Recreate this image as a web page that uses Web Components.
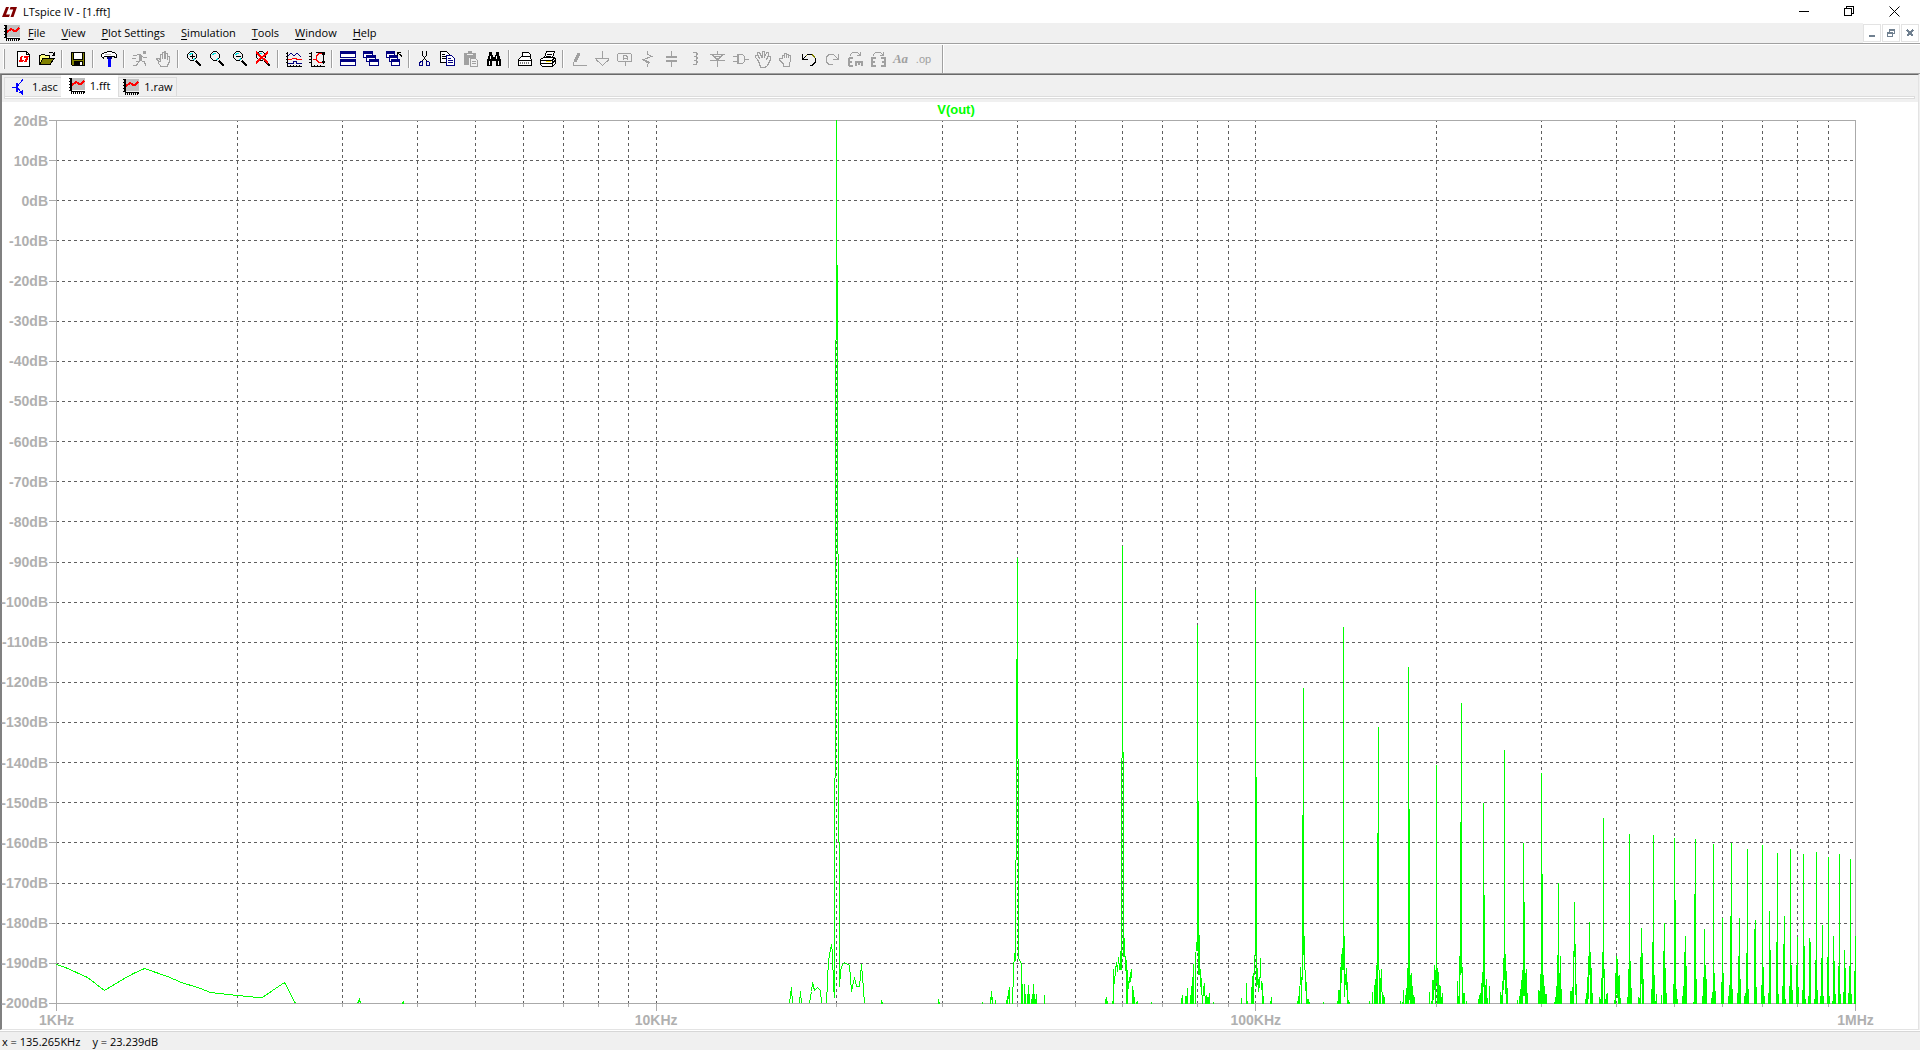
<!DOCTYPE html>
<html lang="en">
<head>
<meta charset="utf-8">
<title>LTspice IV - [1.fft]</title>
<style>
html,body{margin:0;height:100%}
body{font:11px/14px "Open Sans","Noto Sans",sans-serif;color:#000;background:#f0f0f0;overflow:hidden}
</style>
</head>
<body>
<app-window>
  <title-bar>LTspice IV - [1.fft]</title-bar>
  <menu-bar></menu-bar>
  <tool-bar></tool-bar>
  <mdi-pane>
    <tab-strip>
      <doc-tab icon="transistor">1.asc</doc-tab>
      <doc-tab icon="chart" active>1.fft</doc-tab>
      <doc-tab icon="chart">1.raw</doc-tab>
    </tab-strip>
    <fft-plot trace="V(out)"></fft-plot>
  </mdi-pane>
  <status-bar><span>x = 135.265KHz</span><span>y = 23.239dB</span></status-bar>
</app-window>
<script>
const G = '#a0a0a0', N = '#000080', W = '#fff';
const p = (d, stroke = '#000', fill = 'none', w = 1) => `<path d="${d}" stroke="${stroke}" fill="${fill}" stroke-width="${w}"/>`;
const f = (d, fill = '#000') => `<path d="${d}" fill="${fill}"/>`;
const win = (x, y, w, h) => p(`M${x}.5 ${y}.5h${w}v${h}h-${w}z`, N, W) + f(`M${x} ${y}h${w + 1}v3h-${w + 1}z`, N);
const lens = p('M4.500.5h3l3 3v3l-3 3h-3l-3-3v-3z') + p('M3.500 4v-1h1v-1h2', '#00e0e0') + p('M7 8.500h1v-1h1', '#00e0e0') + p('M10 10l5 5', '#000', 'none', 2);
const logo = (c, t) => `<g transform="${t}">` + f('M4 0h3L4 7.500h4L7 10H0zM8.500 0H15l-3.500 10H8.500l2.700-7.500H7.600z', c) + '</g>';

const ICONS = {
  chart: f('M2 0h14v12H2z', '#c0c0c0') + f('M1 0h2v13h13v2h-1v1h-1v-2h-1v2h-1v-2h-1v2h-1v-2H9v2H8v-2H7v2H6v-2H5v2H4v-2H3v2H2v-3H0v-1h1v-2H0V9h1V7H0V6h1V4H0V3h1V1H0V0z') + p('M3 7L7 4L11 6.500L15.500 3', '#f00', 'none', 2),
  transistor: p('M6 4v9', '#00f', 'none', 2) + p('M1 8.500h5M6.500 7L12 .5M6.500 9L11.500 14.500', '#00f') + f('M12 16L8 13.500L11.500 11z', '#00f'),
  neu: p('M1.500.5h9l3 3v12h-12z', '#000', W) + p('M10.500.5v3h3') + f('M5 5h2l-1.500 4H8l-1 2H3zM8 5h5l-2 6H8l2-4H7.500z', '#f00'),
  open: p('M.5 13.500v-9h1l1-1h3l1 1h4v3', '#000', '#ffff80') + p('M.5 13.500l3.500-6h11l-4 6z', '#000', '#808000') + p('M9.500 2.500l1-1h3l1.500 2M15.500 1v3h-3'),
  save: p('M1.500 1.500h13v13h-12l-1-1z', '#000', '#808000') + f('M4 2h8v6H4z', W) + p('M3.500 2v6.500h9V2') + f('M4 10h9v5H4z') + f('M10 11h2v3h-2z', W),
  hammer: p('M.5 5.500v-2l3-2h2l1-1h4l1 1h2l2 2v3h-1l-2-1h-9l-1 1.500z', '#000', W) + f('M4 3h6v1H4z', '#c0c0c0') + f('M7 7h3v9H7z', '#00f') + f('M6 6h5v2H6z', '#000080'),
  run: p('M1 4.500h3M0 7.500h4M4 10.500h4M3.500 5.500l2-2h3l3 3h3M9.500 4v4l-3 3l-2 3.500H1M8 9.500l4 1 2 4', G) + f('M11 0h3v3h-3z', G) + p('M8 4v5', G, 'none', 3),
  hand: p('M4.500 11L1.500 8V7h2l1.500 2V3.500h2V8V1.500h2V8V.5h1.500V8V2.500h2v6V5.500h1.500v6l-2 4h-6l-3-4', G),
  zin: lens + p('M4 5h5M6.500 3v5', '#000'),
  zoom: lens,
  zout: lens + p('M4 5.500h5', '#000'),
  zfit: lens + p('M1 1L13 12M13 1L1 12', '#f00', 'none', 2),
  plot1: p('M1.500 1v14.500H16M0 2.500h2M0 5.500h2M0 8.500h2M0 11.500h2M4.500 14v2M7.500 14v2M10.500 14v2M13.500 14v2') + p('M2 5L5 2L8 5L11 2L15 6', N) + p('M2 8.500h3l2-1h3l1 1h5', '#f00') + p('M2 12.500h5l1-2h2l1 2h5', N),
  plot2: p('M2.500 1v14.500H16M0 2.500h3M0 5.500h3M0 8.500h3M0 11.500h3M5.500 14v2M8.500 14v2M11.500 14v2M14.500 2v11M13 3.500L14.500 1.500L16 3.500M13 10.500L14.500 12.500L16 10.500M7 1.500h9') + p('M13 2.500h-3l-3 3v3l3 3h3M4 8.500h3', '#f00'),
  tile: win(0, 0, 15, 6) + win(0, 8, 15, 6),
  casc: win(0, 0, 9, 6) + win(3, 4, 9, 6) + win(6, 8, 9, 6),
  casx: win(0, 0, 8, 6) + win(3, 4, 8, 6) + win(5, 8, 8, 6) + p('M15.500 6V5L11.500 1.500M11.500 5V1.500H15'),
  cut: p('M5.500 0v4l4 6M9.500 0v4l-4 6', '#000') + p('M4.500 10.500h1v4h-3v-3zM9.500 10.500h2l1 1v3h-3z', N),
  copy: p('M.5.5h6l3 3v8h-9z', '#000', W) + p('M2 3.500h3M2 5.500h5M2 7.500h5') + p('M6.500 4.500h5l3 3v7h-8z', N, W) + p('M8 7.500h3M8 9.500h5M8 11.500h5', N),
  paste: f('M1 2h4V0h4v2h4v5H6v7H1z', G) + f('M4 3h6v1H4z', '#f0f0f0') + p('M7.500 7.500h5l2 2v6h-7z', G, '#f0f0f0') + p('M9 10.500h4M9 12.500h4', G),
  find: f('M3 1h3v3h1v2h2V4h1V1h3v3l2 5v6h-5v-5H6v5H1V9l2-5z') + f('M4 5h1v3H4zM3 10h1v4H3zM10 5h1v3h-1zM12 10h1v4h-1z', W),
  print1: p('M5.500 6.500v-5h6l2 2v3', '#000', W) + p('M1.500 8.500l3-3h8l2 3v6h-13z', '#000', W) + p('M2 9.500h12', '#000') + '<path d="M3 11h10M3 12.500h10" stroke="#808080" stroke-dasharray="1 1"/>' + p('M1 14.500h14', '#000'),
  print2: p('M4.500 7L6.500.5h8l-2 6', '#000', W) + p('M7 3.500h5M6 5.500h5') + p('M.5 8.500l3-2h11l1 1v5l-3 3h-10l-2-2z', '#000', W) + p('M1 9.500h11l3-3M1 12.500h11l3-3M12.500 9v6') + p('M6 10.500h5', '#ffe000'),
  pencil: p('M1.500 14.500H16M2.500 11v3H5', G) + p('M4 11L8 2', G, 'none', 3),
  gnd: p('M8.500 0v7M1 7.500h14M2 8.500L8.500 14.500L15 8.500', G),
  label: p('M3.500 2.500h-2l-1 1v6l1 1h13v-7l-1-1zM8.500 11v4', G) + p('M6 9V5.500L7 4h2l1 1.500V9M6 7h4', G),
  res: p('M7.500 0v3l4 2.500l-8 3l6 3l-2 2V16M11 5l2.500 1.500M3 9l5 3', G),
  cap: p('M8.500 0v6M8.500 10v6', G) + p('M3 6h11M3 10h11', G, 'none', 2),
  ind: p('M7 1.500h3l1 1v1l-1 1.500h-2h2l1 1.500v1l-1 1.500h-2h2l1 1.500v1l-1 2H7', G, 'none', 1),
  diode: p('M8.500 0v4M1 3.500h15M3.500 4l5 5l5-5M1 9.500h15M8.500 10v6M5 5h7M7 7h3', G),
  gate: p('M5.500 3.500h5l2 2v5l-2 2h-5zM1 5.500h4M1 10.500h4M13 8.500h4', G, 'none', 1) + p('M6 4v9', G, 'none', 2),
  hands: p('M3.500 10L.5 6.500v-2h2l2 3L2.500 3V1.500h2L7 6.500V1.500L8 .5h1.500v6l2-5h2v2l-2 5 2-3h2v3l-3 6-2 1.500h-5z', G),
  hand2: p('M4.500 12L1.500 9V7.500h3V4h2v3V2.500h2V7V3.500h2V7V4.500h2V9l-1 4v2.500h-6V13z', G),
  undo: p('M1.500 3v5.500H7M2 8L6 4', '#000') + p('M5 4.500l2-1h4l3 3', '#808000') + p('M14.500 7v4l-3 3H9M6 3.500h5'),
  redo: p('M14.500 3v5.500H9M14 8L10 4', G) + p('M11 4.500l-2-1H5l-3 3v4l3 3h4', G),
  rot: p('M3 4.500C4 .5 11 .5 13 4M13.500 1v3.500H10', G) + p('M2 7v8M2 7h4M2 11h3M2 15h4', G, 'none', 2) + p('M8 11h8M9 10v5M12 11v3M15 10v5', G, 'none', 2),
  mir: p('M3 4.500C4 .5 11 .5 13 4M13.500 1v3.500H10', G) + p('M2 7v8M1 7h5M2 11h3M1 15h5M15 7v8M16 7h-5M15 11h-3M16 15h-5', G, 'none', 2)
};
const svg = (name, cls = '') => `<svg class="${cls}" width="16" height="16" viewBox="0 0 16 16" fill="none" shape-rendering="crispEdges" aria-hidden="true">${ICONS[name]}</svg>`;
const BASE = `*,:host{box-sizing:border-box}button{font:inherit;color:inherit;background:none;border:0;padding:0;margin:0}svg{display:block;overflow:visible}`;
const define = (tag, render) => customElements.define(tag, class extends HTMLElement {
  constructor() { super(); this.attachShadow({ mode: 'open' }); }
  connectedCallback() { this.shadowRoot.innerHTML = render(this); }
});

define('app-window', () => `<style>${BASE}:host{display:flex;flex-direction:column;height:100vh}</style><slot></slot>`);

define('title-bar', () => `<style>${BASE}
:host{display:flex;align-items:center;flex:none;height:23px;background:#fff;padding:0 3px 0 2px}
.t{flex:1;padding-left:6px}
button{width:45px;height:21px;display:flex;align-items:center;justify-content:center}
</style>
<svg width="15" height="10" viewBox="0 0 15 10">${logo('#800000', '')}</svg>
<span class="t"><slot></slot></span>
<button aria-label="Minimize"><svg width="11" height="11" shape-rendering="crispEdges"><path d="M0 5.500h10" stroke="#000"/></svg></button>
<button aria-label="Restore"><svg width="11" height="11" fill="none" shape-rendering="crispEdges"><path d="M.5 2.500h7v7h-7zM2.500 2V.5h7v7H8" stroke="#000"/></svg></button>
<button aria-label="Close"><svg width="11" height="11"><path d="M.5.5l10 10M10.500.5l-10 10" stroke="#000"/></svg></button>`);

define('menu-bar', () => `<style>${BASE}
:host{display:flex;align-items:center;flex:none;height:21px;background:#f0f0f0;border-bottom:1px solid #a0a0a0;padding-left:4px}
nav{display:flex;flex:1;gap:16px;padding-left:8px}
u{text-underline-offset:2px}
.m{display:flex;gap:1px;background:#fff;padding:1px 1px 1px 0;align-self:stretch}
.m button{width:18px;height:18px;border:1px solid #e3e3e3;display:flex;align-items:center;justify-content:center}
</style>
${svg('chart')}
<nav>${['File', 'View', 'Plot Settings', 'Simulation', 'Tools', 'Window', 'Help'].map(t => `<button><u>${t[0]}</u>${t.slice(1)}</button>`).join('')}</nav>
<div class="m">
<button aria-label="Minimize document"><svg width="8" height="8" shape-rendering="crispEdges"><path d="M1 7h6" stroke="#708090" stroke-width="2"/></svg></button>
<button aria-label="Restore document"><svg width="8" height="8" fill="none" shape-rendering="crispEdges"><path d="M.5 3.500h5v4h-5zM0 4.500h6M2.500 3V.5h5v4H6M2 1.500h6" stroke="#708090"/></svg></button>
<button aria-label="Close document"><svg width="8" height="8" shape-rendering="crispEdges"><path d="M1 1l6 6M7 1L1 7" stroke="#708090" stroke-width="2"/></svg></button>
</div>`);

const TOOLS = [['neu', 'New'], ['open', 'Open'], 0, ['save', 'Save'], 0, ['hammer', 'Control panel'], 0, ['run', 'Run', 1], ['hand', 'Halt', 1], 0,
  ['zin', 'Zoom in'], ['zoom', 'Pan'], ['zout', 'Zoom out'], ['zfit', 'Zoom full'], 0, ['plot1', 'Pick traces'], ['plot2', 'Autorange'], 0,
  ['tile', 'Tile windows'], ['casc', 'Cascade'], ['casx', 'Close windows'], 0, ['cut', 'Cut'], ['copy', 'Copy'], ['paste', 'Paste', 1], ['find', 'Find'], 0,
  ['print1', 'Print setup'], ['print2', 'Print'], 0, ['pencil', 'Wire', 1], ['gnd', 'Ground', 1], ['label', 'Label net', 1], ['res', 'Resistor', 1], ['cap', 'Capacitor', 1],
  ['ind', 'Inductor', 1], ['diode', 'Diode', 1], ['gate', 'Component', 1], ['hands', 'Move', 1], ['hand2', 'Drag', 1], ['undo', 'Undo'], ['redo', 'Redo', 1],
  ['rot', 'Rotate', 1], ['mir', 'Mirror', 1], ['Aa', 'Text', 1], ['.op', 'Directive', 1]];
define('tool-bar', () => `<style>${BASE}
:host{display:flex;flex:none;height:30px;background:#f0f0f0;border-top:1px solid #fff;border-bottom:1px solid #a0a0a0;padding-left:3px}
.grip{width:2px;margin:4px 7px 4px 0;border-left:1px solid #fff;border-right:1px solid #a0a0a0}
.bar{display:flex;align-items:center;padding-right:7px;border-right:1px solid #a0a0a0;box-shadow:1px 0 #fff}
button{width:23px;height:24px;display:flex;align-items:center;justify-content:center}
i{width:8px;height:18px;display:block}
i::before{content:"";display:block;width:1px;height:18px;margin-left:3px;background:#a0a0a0;box-shadow:1px 0 #fff}
b{color:#a0a0a0;font:italic bold 13px/16px "Liberation Serif",serif}
b.op{font:11px/16px "Liberation Sans",sans-serif}
</style><div class="grip"></div><div class="bar">${TOOLS.map(t => !t ? '<i></i>' :
  `<button aria-label="${t[1]}"${t[2] ? ' disabled' : ''}>${ICONS[t[0]] ? svg(t[0]) : `<b${t[0] === '.op' ? ' class="op"' : ''}>${t[0]}</b>`}</button>`).join('')}</div>`);

define('mdi-pane', () => `<style>${BASE}
:host{display:flex;flex-direction:column;flex:1;min-height:0;border:solid;border-width:1px 1px 1px 2px;border-color:#696969 #e3e3e3 #e3e3e3 #808080;margin-right:1px;background:#fff}
</style><slot></slot>`);

define('tab-strip', () => `<style>${BASE}
:host{display:flex;flex-direction:column;background:#f0f0f0;height:27px;flex:none}
div{display:flex;align-items:flex-end;height:21px;padding-left:2px}
hr{margin:0 3px 0 2px;height:3px;border:1px solid #dcdcdc;background:#fff}
</style><div role="tablist"><slot></slot></div><hr>`);

define('doc-tab', el => {
  const on = el.hasAttribute('active');
  return `<style>${BASE}
:host{display:block}
button{display:flex;align-items:center;gap:5px;height:19px;padding:0 3px 0 4px;border:1px solid #dcdcdc;border-bottom:0}
button.on{height:22px;margin:0 0 -1px;padding:0 7px 2px;background:#fff;border-color:#fff;position:relative}
button.tr{padding-left:6px;border-right:0}
</style><button role="tab" aria-selected="${on}" class="${on ? 'on' : ''} ${el.getAttribute('icon') === 'transistor' ? 'tr' : ''}">${svg(el.getAttribute('icon'))}<span><slot></slot></span></button>`;
});

/* Spectrum in pane coordinates. Each bar is "x top" or "x top bottom"; the floor is 1003. */
const BARS = `402 1002,403 1001,836 120 340,837 265 554,835 340 778,838 554 842,834 778 998,839 842 987,881 1000,882 1002,938 999,939 1002,
982 1002,990 997,991 991 1000,992 997,995 1000,1006 1000,1007 996,1008 990 999,1009 987,1012 987,1013 962 987,1014 953 962,1015 860 961,1016 659 860,1017 558 759,1018 759 959,1019 959 961,1020 961 963,1021 963,1022 984,1024 984,1025 994,1027 994,1028 985,1029 994,1031 999,1032 994,1033 984,1034 994,1035 999,1036 994,1044 995,
1122 546 758,1123 752 957,1121 758 970,1124 938 957,1125 956 971,1126 960,1127 970,1128 981 989,1129 977 983,1130 972 982,1131 969 978,1132 986,1133 990,1134 997,1136 1002,1137 1001,1151 1002,1120 951 970,1119 963 970,1118 957 964,1117 965 972,1116 962 967,1115 966 976,1114 976 984,1113 969,1112 1001,1107 1001,1106 997,1105 999,
1197 625 951,1198 801 975,1196 942 951,1195 952,1193 964,1192 977,1191 986,1190 995,1187 988,1186 996,1185 996,1182 995,1181 998,1199 935 975,1200 969 987,1201 978 995,1202 995,1203 986 996,1204 983 996,1205 996,1206 995,1207 997,1208 997,1209 993,1213 1002,
1255 590 955,1256 777 987,1254 955 975,1253 973,1252 976,1251 987,1247 1001,1246 983,1241 998,1257 968 985,1258 979 992,1259 977 988,1260 958 978,1261 981 990,1262 983,1263 996,1270 1001,1271 997,
1303 688 955,1302 815 980,1304 936 970,1301 977,1300 967 985,1299 986,1298 996,1297 1001,1305 970 991,1306 982,1307 999,1308 999,1309 1002,1323 1002,
1343 627 970,1344 936 997,1342 948 970,1341 954 983,1340 967,1339 990,1338 990,1337 1001,1345 974 985,1346 968 990,1347 982,1348 1000,1349 1002,
1378 727 970,1377 833,1376 965,1375 979,1374 985,1372 992,1369 1001,1379 970,1380 978,1381 969 992,1382 992,1383 995,1384 997,
1408 667,1409 809 1000,1407 968,1406 988,1405 995,1403 990,1402 1002,1400 1001,1410 975,1411 973,1412 986,1413 995,1414 997,
1436 765 983,1435 970,1434 965 990,1433 980 1000,1432 980,1431 1001,1429 992,1437 968,1438 972,1439 985,1440 986,1441 997,1442 993,
1461 703 973,1460 822 975,1459 956,1458 996,1457 981,1462 967,1463 993,1464 993,1466 1001,
1483 803 987,1484 895,1482 972,1481 983,1480 993,1479 995,1478 999,1485 985,1486 979,1487 998,1489 986,
1504 750 980,1505 954 994,1503 958 990,1502 981,1501 995,1500 992,1506 971,1507 988,
1523 843 996,1524 902 996,1522 970,1521 980,1520 989,1519 996,1517 1000,1525 973,1526 969,1527 993,
1541 773,1542 874,1540 974,1539 991,1538 990,1543 975,1544 986,1545 994,1546 994,
1558 883,1557 955,1556 986,1555 997,1554 1002,1559 973,1560 956,1561 989,1574 902 957,1575 944 995,1573 951,1572 987,1571 991,1570 991,1576 984,
1589 922 975,1588 956 999,1590 952,1587 977,1586 993,1585 999,1591 968,1592 993,1603 818 978,1602 952,1601 978,1600 999,1599 997,1604 969,1605 999,1606 994,1607 993,
1616 956 994,1617 959 998,1615 973,1614 1000,1618 976,1619 975,1620 998,1629 834,1630 961,1628 969,1627 997,1631 988,1638 997,1639 998,
1641 928 984,1640 957,1642 953,1643 979,1653 835,1652 942,1654 975,1651 989,1655 1001,1656 994,1664 923,1663 951,1665 968,1666 993,1661 995,
1674 838,1675 900,1673 984,1676 989,1677 999,1685 936,1684 952,1686 966,1683 986,1682 996,1695 839,1694 894,1696 979,1693 1002,
1704 929,1705 965,1703 977,1706 979,1702 996,1713 844,1714 973,1712 992,1711 998,1715 991,1722 918,1721 982,1723 973,
1731 843,1730 916,1729 985,1732 989,1728 996,1739 918,1738 956,1740 979,1737 993,1747 849,1746 953,1748 989,1745 993,1744 996,
1755 920,1754 929,1756 987,1762 845,1763 967,1761 985,1764 996,1769 911,1770 950,1768 993,1777 853,1776 942,1778 994,
1784 916,1783 944,1785 999,1782 986,1790 849,1791 965,1789 986,1792 990,1797 937,1796 965,1798 987,1803 854,1804 946,1802 990,1805 999,
1809 938,1810 942,1808 996,1816 852,1815 960,1817 990,1814 999,1822 925,1821 958,1823 996,1820 996,1828 857,1827 957,1829 996,
1833 936,1834 961,1835 994,1832 1001,1839 854,1838 966,1840 994,1844 950,1845 968,1843 992,1850 859,1849 966,1851 994,1848 993,1855 936,1854 971`;
const CURVES = [
  [56, 964, 65, 967, 87, 977, 104, 990, 122, 979, 133, 973, 144, 968, 167, 976, 181, 982, 200, 988, 210, 992, 237, 995, 257, 997, 262, 997, 275, 988, 284, 982, 295, 1003],
  [357, 1003, 359, 999, 360, 1003], [789, 1003, 791, 987, 792, 1003], [799, 1003, 800, 991, 801, 1003],
  [809, 1003, 811, 991, 812, 982, 814, 990, 817, 987, 820, 990, 821, 1003],
  [826, 1003, 827, 980, 828, 960, 831, 944, 832, 953, 833, 985, 834, 998],
  [839, 987, 840, 970, 842, 964, 844, 962, 849, 965, 851, 991, 854, 977, 856, 986, 859, 986, 861, 964, 863, 989, 864, 1003]];

define('fft-plot', el => {
  const L = 56, T = 120, R = 1855, B = 1003;
  let grid = '', vgrid = '', axis = `M${L - 7} ${T}.5H${R + 1}M${L - 7} ${B}.5H${R + 1}M${L}.5 ${T}V${B + 8}M${R}.5 ${T}V${B + 8}`;
  for (let i = 1; i < 22; i++) {
    const y = Math.round(T + i * (B - T) / 22);
    grid += `M${L} ${y}.5H${R}`;
    axis += `M${L - 7} ${y}.5H${L}`;
  }
  for (let d = 0; d < 3; d++) for (let k = 1; k < 10; k++) {
    if (d + k === 1) continue;
    const x = Math.round(L + (R - L) / 3 * (d + Math.log10(k)));
    vgrid += `M${x}.5 ${T}V${B}`;
    axis += `M${x}.5 ${B}V${B + (k === 1 ? 8 : 4)}`;
  }
  const bars = BARS.split(',').map(s => s.trim().split(' ')).map(([x, a, b]) => `M${x} ${a}h1V${b || B + 1}h-1z`).join('');
  const curves = CURVES.map(c => 'M' + c.map(v => v + '.5').join(' ')).join('');
  const db = Array.from({ length: 23 }, (_, i) => `<span>${20 - i * 10}dB</span>`).join('');
  return `<style>${BASE}
:host{display:grid;grid-template:18px 1fr 25px / 54px 1fr 62px;flex:1;min-height:0;background:#fff;color:#b0b0b0;font:bold 14px/16px "Liberation Sans",sans-serif}
.trace{grid-column:2;color:#0f0;font-size:13px;text-align:center}
.y{grid-area:2/1;display:flex;flex-direction:column;justify-content:space-between;padding-right:8px;overflow:visible}
.y span{height:1px;display:flex;align-items:center;justify-content:flex-end;white-space:nowrap}
svg{grid-area:2/2;width:100%;height:100%;min-height:0}
.x{grid-area:3/2;display:flex;justify-content:space-between;padding-top:8px}
.x span{width:1px;display:flex;justify-content:center;white-space:nowrap}
</style>
<div class="trace">${el.getAttribute('trace')}</div>
<div class="y">${db}</div>
<svg viewBox="${L} ${T} ${R - L + 1} ${B - T + 1}" preserveAspectRatio="none" fill="none" shape-rendering="crispEdges" role="img" aria-label="FFT magnitude">
<path d="${grid}" stroke="#5f5f5f" stroke-dasharray="3 3"/>
<path d="${vgrid}" stroke="#5f5f5f" stroke-dasharray="3 3" stroke-dashoffset="1"/>
<path d="${axis}" stroke="#aaa"/>
<path d="${curves}" stroke="#0f0"/><path d="${bars}" fill="#0f0"/></svg>
<div class="x"><span>1KHz</span><span>10KHz</span><span>100KHz</span><span>1MHz</span></div>`;
});

define('status-bar', () => `<style>${BASE}
:host{display:flex;gap:12px;align-items:center;flex:none;height:19px;margin-top:1px;padding:2px 0 0 2px;background:#f0f0f0;border-top:1px solid #d7d7d7;box-shadow:0 -1px #fff}
</style><slot></slot>`);
</script>
</body>
</html>
